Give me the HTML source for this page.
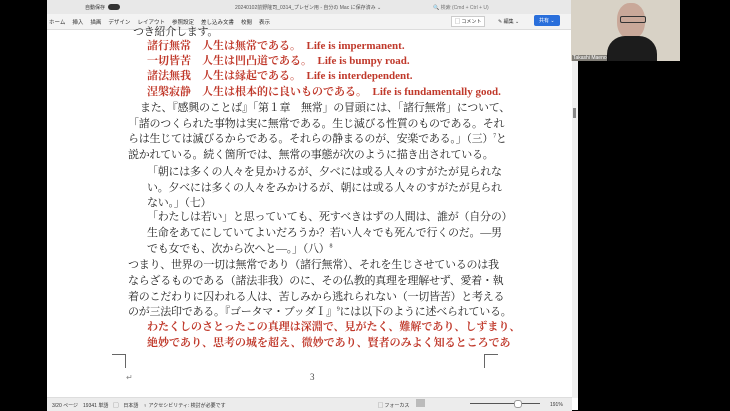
<!DOCTYPE html><html><head><meta charset="utf-8"><style>
body{margin:0;width:730px;height:410px;background:#000;position:relative;overflow:hidden;font-family:"Liberation Serif","Noto Serif CJK SC",serif}
.a{position:absolute;white-space:nowrap}
.t{font-size:11px;color:#222;letter-spacing:-0.25px}
.r{color:#c0392b;font-weight:bold;letter-spacing:0}
.s{font-family:"Liberation Sans","Noto Sans CJK JP",sans-serif;font-size:5px;color:#333}
</style></head><body>
<div class="a" style="left:47px;top:0;width:531px;height:410px;background:#fff"></div>
<div class="a" style="left:47px;top:0;width:531px;height:14px;background:#e8e8e8"></div>
<div class="a" style="left:47px;top:14px;width:531px;height:15px;background:#f3f3f3;border-bottom:1px solid #ddd"></div>
<div class="a s" style="left:85px;top:4px">自動保存</div>
<div class="a" style="left:108px;top:4px;width:12px;height:6px;border-radius:3px;background:#333"></div>
<div class="a s" style="left:235px;top:4px;color:#555">20240102前野隆司_0314_プレゼン用 - 自分の Mac に保存済み ⌄</div>
<div class="a s" style="left:433px;top:4px;color:#777">🔍 検索 (Cmd + Ctrl + U)</div>
<div class="a s" style="left:49px;top:18px;font-size:5.5px">ホーム　 挿入　 描画　 デザイン　 レイアウト　 参照設定　 差し込み文書　 校閲　 表示</div>
<div class="a s" style="left:451px;top:16px;border:1px solid #ccc;padding:1px 3px;background:#fff">▢ コメント</div>
<div class="a s" style="left:498px;top:18px">✎ 編集 ⌄</div>
<div class="a s" style="left:534px;top:15px;background:#2a6fdb;color:#fff;padding:2px 5px;border-radius:2px">共有 ⌄</div>
<div class="a" style="left:572px;top:28px;width:6px;height:370px;background:#f0f0f0"></div>
<div class="a" style="left:573px;top:108px;width:3px;height:10px;background:#888"></div>
<div class="a t" style="left:133px;top:23px">つき紹介します。</div>
<div class="a t r" style="left:147px;top:37px">諸行無常　人生は無常である。　Life is impermanent.</div>
<div class="a t r" style="left:147px;top:52px">一切皆苦　人生は凹凸道である。　Life is bumpy road.</div>
<div class="a t r" style="left:147px;top:67px">諸法無我　人生は縁起である。　Life is interdependent.</div>
<div class="a t r" style="left:147px;top:83px">涅槃寂静　人生は根本的に良いものである。　Life is fundamentally good.</div>
<div class="a t" style="left:140px;top:99px">また、『感興のことば』「第１章　無常」の冒頭には、「諸行無常」について、</div>
<div class="a t" style="left:128px;top:115px">「諸のつくられた事物は実に無常である。生じ滅びる性質のものである。それ</div>
<div class="a t" style="left:128px;top:130px">らは生じては滅びるからである。それらの静まるのが、安楽である。」（三）<sup style="font-size:6px">7</sup>と</div>
<div class="a t" style="left:128px;top:146px">説かれている。続く箇所では、無常の事態が次のように描き出されている。</div>
<div class="a t" style="left:147px;top:163px">「朝には多くの人々を見かけるが、夕べには或る人々のすがたが見られな</div>
<div class="a t" style="left:147px;top:179px">い。夕べには多くの人々をみかけるが、朝には或る人々のすがたが見られ</div>
<div class="a t" style="left:147px;top:194px">ない。」（七）</div>
<div class="a t" style="left:147px;top:208px">「わたしは若い」と思っていても、死すべきはずの人間は、誰が（自分の）</div>
<div class="a t" style="left:147px;top:224px">生命をあてにしていてよいだろうか？若い人々でも死んで行くのだ。―男</div>
<div class="a t" style="left:147px;top:240px">でも女でも、次から次へと―。」（八）<sup style="font-size:6px">8</sup></div>
<div class="a t" style="left:128px;top:256px">つまり、世界の一切は無常であり（諸行無常）、それを生じさせているのは我</div>
<div class="a t" style="left:128px;top:272px">ならざるものである（諸法非我）のに、その仏教的真理を理解せず、愛着・執</div>
<div class="a t" style="left:128px;top:288px">着のこだわりに囚われる人は、苦しみから逃れられない（一切皆苦）と考える</div>
<div class="a t" style="left:128px;top:303px">のが三法印である。『ゴータマ・ブッダⅠ』<sup style="font-size:6px">9</sup>には以下のように述べられている。</div>
<div class="a t r" style="left:147px;top:318px">わたくしのさとったこの真理は深淵で、見がたく、難解であり、しずまり、</div>
<div class="a t r" style="left:147px;top:334px">絶妙であり、思考の城を超え、微妙であり、賢者のみよく知るところであ</div>
<div class="a" style="left:112px;top:354px;width:13px;height:13px;border-top:1px solid #666;border-right:1px solid #666"></div>
<div class="a" style="left:484px;top:354px;width:13px;height:13px;border-top:1px solid #666;border-left:1px solid #666"></div>
<div class="a" style="left:126px;top:373px;font-size:8px;color:#888">↵</div>
<div class="a" style="left:310px;top:372px;font-size:9px;color:#444">3</div>
<div class="a" style="left:47px;top:397px;width:525px;height:13px;background:#ececec;border-top:1px solid #ddd"></div>
<div class="a s" style="left:52px;top:402px">3/20 ページ　19341 単語　▢　日本語　♀ アクセシビリティ: 検討が必要です</div>
<div class="a s" style="left:378px;top:402px">▢ フォーカス</div>
<div class="a" style="left:416px;top:399px;width:9px;height:8px;background:#bbb"></div>
<div class="a" style="left:470px;top:403px;width:70px;height:1px;background:#555"></div>
<div class="a" style="left:514px;top:400px;width:6px;height:6px;border-radius:3px;background:#fff;border:1px solid #999"></div>
<div class="a s" style="left:550px;top:402px">191%</div>
<div class="a" style="left:571px;top:0;width:109px;height:61px;background:#d8d2c6"></div>
<div class="a" style="left:617px;top:3px;width:28px;height:36px;border-radius:45%;background:#c9a899"></div>
<div class="a" style="left:607px;top:36px;width:50px;height:25px;border-radius:18px 18px 0 0;background:#1c1c1c"></div>
<div class="a" style="left:620px;top:16px;width:24px;height:5px;border:1px solid #333;border-radius:2px"></div>
<div class="a" style="left:572px;top:55px;font-family:'Liberation Sans',sans-serif;font-size:5px;color:#fff;background:rgba(0,0,0,.4);padding:0 1px">Takashi Maeno</div>
</body></html>
